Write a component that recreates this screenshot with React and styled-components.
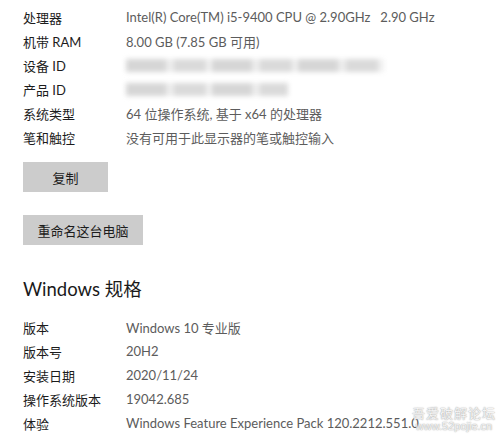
import React from 'react';
import styled, { createGlobalStyle } from 'styled-components';

const GlobalStyle = createGlobalStyle`
  html, body {
    margin: 0;
    padding: 0;
    background: #ffffff;
  }
`;

const FONT = `'Lato', 'Noto Sans CJK SC', sans-serif`;

const Page = styled.div`
  position: relative;
  width: 500px;
  height: 440px;
  overflow: hidden;
  background: #ffffff;
  padding: 5px 0 0 23px;
  box-sizing: border-box;
  font-family: ${FONT};
  font-size: 13px;
`;

const SpecList = styled.div`
  display: grid;
  grid-template-columns: 103px 1fr;
  grid-auto-rows: 24px;
  align-items: center;
`;

const Label = styled.div`
  color: #1c1c1c;
  white-space: nowrap;
`;

const Value = styled.div`
  color: #5c5c5c;
  white-space: pre;
`;

const Blurred = styled.div`
  height: 13px;
  width: ${(p) => p.$w}px;
  background: repeating-linear-gradient(
    90deg,
    #d6d6d6 0 40px,
    #ececec 40px 48px,
    #dadada 48px 80px,
    #f0f0f0 80px 86px
  );
  filter: blur(2.5px);
`;

const Button = styled.button`
  display: block;
  height: 30px;
  width: ${(p) => p.$w}px;
  margin-top: ${(p) => p.$mt}px;
  padding: 0;
  border: none;
  background: #cccccc;
  color: #1c1c1c;
  font-family: ${FONT};
  font-size: 13px;
`;

const Heading = styled.h2`
  margin: 30px 0 12px;
  font-weight: 400;
  font-size: 18.5px;
  line-height: 28px;
  color: #1a1a1a;
  font-family: ${FONT};
`;

const Watermark = styled.div`
  position: absolute;
  left: 412px;
  bottom: 7px;
  display: flex;
  flex-direction: column;
  align-items: center;
  color: #f4f4f4;
  text-shadow: 0 0 1px #a0a0a0, 0 0 2px #c0c0c0;
  line-height: 13px;
`;

const WmTitle = styled.span`
  font-size: 13px;
  letter-spacing: 1px;
`;

const WmUrl = styled.span`
  font-size: 11px;
  font-family: 'Liberation Sans', sans-serif;
`;

const deviceRows = [
  ['处理器', 'Intel(R) Core(TM) i5-9400 CPU @ 2.90GHz   2.90 GHz'],
  ['机带 RAM', '8.00 GB (7.85 GB 可用)'],
  ['设备 ID', { blur: 258 }],
  ['产品 ID', { blur: 162 }],
  ['系统类型', '64 位操作系统, 基于 x64 的处理器'],
  ['笔和触控', '没有可用于此显示器的笔或触控输入'],
];

const winRows = [
  ['版本', 'Windows 10 专业版'],
  ['版本号', '20H2'],
  ['安装日期', '2020/11/24'],
  ['操作系统版本', '19042.685'],
  ['体验', 'Windows Feature Experience Pack 120.2212.551.0'],
];

const Rows = ({ rows }) => (
  <SpecList>
    {rows.map(([label, value]) => (
      <React.Fragment key={label}>
        <Label>{label}</Label>
        {typeof value === 'string' ? (
          <Value>{value}</Value>
        ) : (
          <Blurred $w={value.blur} />
        )}
      </React.Fragment>
    ))}
  </SpecList>
);

export default function App() {
  return (
    <Page>
      <GlobalStyle />
      <Rows rows={deviceRows} />
      <Button $w={85} $mt={13}>复制</Button>
      <Button $w={120} $mt={23}>重命名这台电脑</Button>
      <Heading>Windows 规格</Heading>
      <Rows rows={winRows} />
      <Watermark>
        <WmTitle>吾爱破解论坛</WmTitle>
        <WmUrl>www.52pojie.cn</WmUrl>
      </Watermark>
    </Page>
  );
}
